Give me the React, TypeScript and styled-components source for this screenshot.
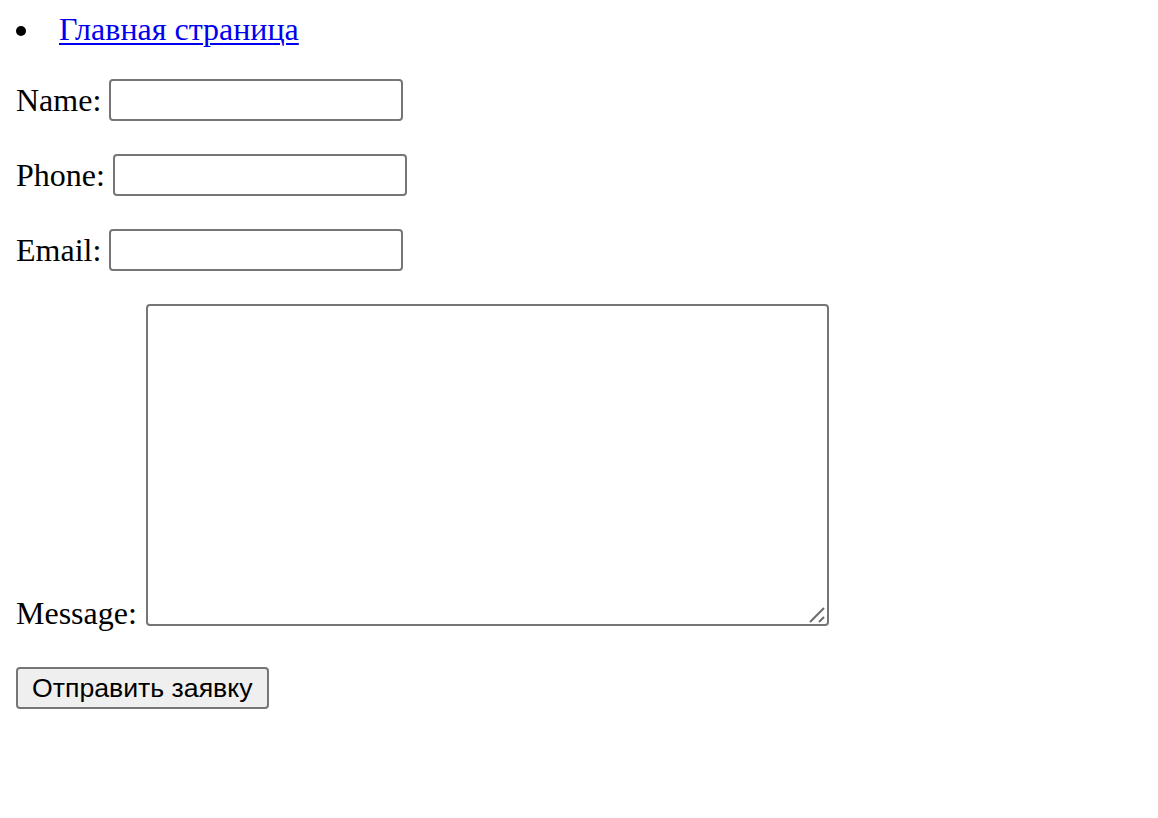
import React, { FC } from "react";
import styled, { createGlobalStyle } from "styled-components";

const GlobalStyle = createGlobalStyle`
  html, body {
    margin: 0;
    background: #ffffff;
  }
  body {
    font-family: "Liberation Serif", "Times New Roman", serif;
    font-size: 32px;
    line-height: 36px;
    color: #000000;
  }
`;

const Page = styled.div`
  padding: 11px 16px 0;
  display: flex;
  flex-direction: column;
  align-items: flex-start;
`;

const NavList = styled.ul`
  list-style: none;
  margin: 0 0 32px;
  padding: 0;
`;

const NavItem = styled.li`
  display: flex;
  align-items: center;
  gap: 34px;
`;

const Bullet = styled.span`
  width: 10px;
  height: 10px;
  margin-top: 3px;
  border-radius: 50%;
  background: #000000;
`;

const NavLink = styled.a`
  margin-left: -1px;
  color: #0000ee;
  text-decoration: underline;
  text-decoration-thickness: 2px;
  text-underline-offset: 3px;
`;

const Form = styled.form`
  display: flex;
  flex-direction: column;
  align-items: flex-start;
  gap: 33px;
`;

const Row = styled.label<{ $tall?: boolean }>`
  display: flex;
  align-items: ${props => (props.$tall ? "flex-end" : "center")};
  gap: 8px;
`;

const LabelText = styled.span<{ $tall?: boolean }>`
  white-space: nowrap;
  margin-bottom: ${props => (props.$tall ? "-5px" : "0")};
`;

const Field = styled.input`
  box-sizing: border-box;
  width: 294px;
  height: 42px;
  margin: 0;
  padding: 2px 4px;
  border: 2px solid #767676;
  border-radius: 4px;
  background: #ffffff;
  font-family: "Liberation Sans", Arial, sans-serif;
  font-size: 26px;
  outline: none;
`;

const AreaWrap = styled.div`
  position: relative;
  margin-left: 1px;
  display: flex;
`;

const MessageArea = styled.textarea`
  box-sizing: border-box;
  width: 683px;
  height: 322px;
  margin: 0;
  padding: 4px;
  border: 2px solid #767676;
  border-radius: 4px;
  background: #ffffff;
  font-family: "Liberation Mono", monospace;
  font-size: 26px;
  outline: none;
  resize: none;
`;

const Grip = styled.svg`
  position: absolute;
  right: 0;
  bottom: 0;
  width: 20px;
  height: 20px;
  pointer-events: none;
`;

const SubmitButton = styled.button`
  margin-top: 8px;
  height: 42px;
  padding: 0 14px;
  border: 2px solid #767676;
  border-radius: 4px;
  background: #efefef;
  color: #000000;
  font-family: "Liberation Sans", Arial, sans-serif;
  font-size: 26.67px;
  line-height: 1;
`;

const App: FC = () => {
  return (
    <>
      <GlobalStyle />
      <Page>
        <NavList>
          <NavItem>
            <Bullet />
            <NavLink href="#">Главная страница</NavLink>
          </NavItem>
        </NavList>
        <Form onSubmit={e => e.preventDefault()}>
          <Row>
            <LabelText>Name:</LabelText>
            <Field type="text" name="name" />
          </Row>
          <Row>
            <LabelText>Phone:</LabelText>
            <Field type="tel" name="phone" />
          </Row>
          <Row>
            <LabelText>Email:</LabelText>
            <Field type="email" name="email" />
          </Row>
          <Row $tall>
            <LabelText $tall>Message:</LabelText>
            <AreaWrap>
              <MessageArea name="message" />
              <Grip viewBox="0 0 20 20">
                <line x1="1" y1="16" x2="15" y2="2" stroke="#6b6b6b" strokeWidth="2" />
                <line x1="10" y1="16" x2="15" y2="11" stroke="#6b6b6b" strokeWidth="2" />
              </Grip>
            </AreaWrap>
          </Row>
          <SubmitButton type="submit">Отправить заявку</SubmitButton>
        </Form>
      </Page>
    </>
  );
};

export default App;
